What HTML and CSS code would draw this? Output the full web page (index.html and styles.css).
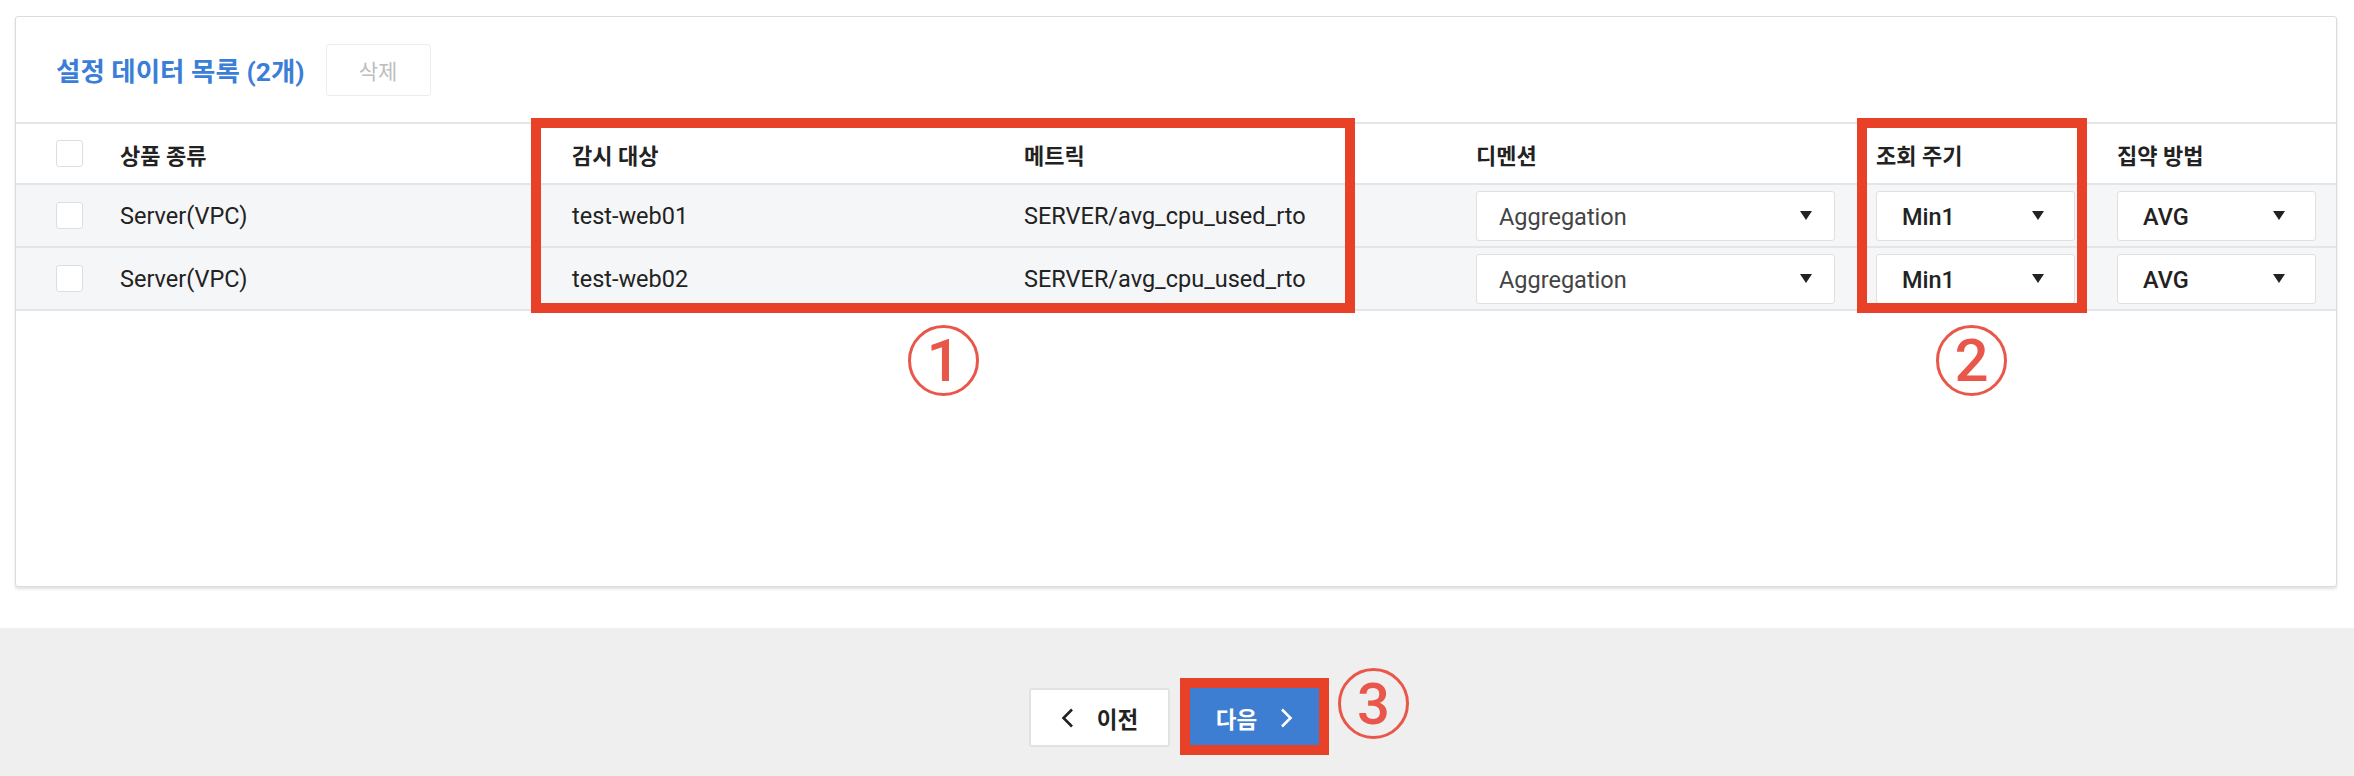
FILE: index.html
```html
<!DOCTYPE html>
<html>
<head>
  <meta charset="utf-8">
  <title>설정 데이터 목록</title>
  <link rel="stylesheet" href="styles.css">
</head>
<body>
  <div class="card">
    <div class="list-head">
      <h2 class="list-title">설정 데이터 목록 (2개)</h2>
      <button class="btn-delete">삭제</button>
    </div>

    <div class="grid">
      <div class="row head">
        <div class="cell chk"><span class="checkbox"></span></div>
        <div class="cell">상품 종류</div>
        <div class="cell">감시 대상</div>
        <div class="cell">메트릭</div>
        <div class="cell">디멘션</div>
        <div class="cell">조회 주기</div>
        <div class="cell">집약 방법</div>
      </div>
      <div class="row">
        <div class="cell chk"><span class="checkbox"></span></div>
        <div class="cell">Server(VPC)</div>
        <div class="cell">test-web01</div>
        <div class="cell">SERVER/avg_cpu_used_rto</div>
        <div class="cell"><div class="select wide muted">Aggregation<span class="caret"></span></div></div>
        <div class="cell"><div class="select">Min1<span class="caret"></span></div></div>
        <div class="cell"><div class="select">AVG<span class="caret"></span></div></div>
      </div>
      <div class="row">
        <div class="cell chk"><span class="checkbox"></span></div>
        <div class="cell">Server(VPC)</div>
        <div class="cell">test-web02</div>
        <div class="cell">SERVER/avg_cpu_used_rto</div>
        <div class="cell"><div class="select wide muted">Aggregation<span class="caret"></span></div></div>
        <div class="cell"><div class="select">Min1<span class="caret"></span></div></div>
        <div class="cell"><div class="select">AVG<span class="caret"></span></div></div>
      </div>
    </div>

    <!-- annotation marks -->
    <div class="mark-box box-1"></div>
    <div class="mark-box box-2"></div>
    <div class="mark-num num-1">1</div>
    <div class="mark-num num-2">2</div>
  </div>

  <div class="footer">
    <button class="btn btn-prev">
      <svg width="13" height="20" viewBox="0 0 13 20"><polyline points="11,1.5 2.5,10 11,18.5" fill="none" stroke="#222" stroke-width="2.6"/></svg>
      <span>이전</span>
    </button>
    <button class="btn btn-next">
      <span>다음</span>
      <svg width="13" height="20" viewBox="0 0 13 20"><polyline points="2,1.5 10.5,10 2,18.5" fill="none" stroke="#fff" stroke-width="2.6"/></svg>
      <span class="mark-box box-3"></span>
      <span class="mark-num num-3">3</span>
    </button>
  </div>
</body>
</html>
```

FILE: styles.css
```css
body {
  margin: 0;
  background: #fff;
  font-family: Roboto, "Noto Sans CJK KR", sans-serif;
  color: #222;
}

.card {
  position: relative;
  box-sizing: border-box;
  height: 571px;
  margin: 16px 17px 0 15px;
  border: 1px solid #dcdcdc;
  border-radius: 3px;
  box-shadow: 0 2px 3px rgba(0, 0, 0, 0.12);
  background: #fff;
}

.list-head {
  display: flex;
  align-items: center;
  height: 105px;
  padding: 0 40px;
}

.list-title {
  margin: 0 21px 0 0;
  font-size: 26.5px;
  font-weight: 700;
  color: #3b7ed8;
}

.btn-delete {
  width: 105px;
  height: 52px;
  border: 1.5px solid #ececec;
  border-radius: 3px;
  background: #fff;
  color: #bdbdbd;
  font-family: "Noto Sans CJK KR", sans-serif;
  font-size: 21px;
}

.grid {
  border-top: 2px solid #e4e5e7;
}

.row {
  display: grid;
  grid-template-columns: 104px 452px 452px 452px 400px 241px 1fr;
  align-items: center;
  height: 61px;
  border-bottom: 2px solid #e4e5e7;
  background: #f5f6f8;
  font-size: 23.5px;
}

.row.head {
  height: 59px;
  background: #fff;
  font-size: 22px;
  font-weight: 700;
}

.cell {
  white-space: nowrap;
}

.chk {
  padding-left: 40px;
  display: flex;
}

.checkbox {
  box-sizing: border-box;
  width: 27px;
  height: 27px;
  border: 1.5px solid #dedede;
  border-radius: 3px;
  background: #fff;
}

.select {
  position: relative;
  box-sizing: border-box;
  width: 199px;
  height: 50px;
  padding-left: 25px;
  line-height: 50px;
  border: 1.5px solid #e0e0e0;
  border-radius: 3px;
  background: #fff;
  font-weight: 500;
  color: #222;
}

.select.wide {
  width: 359px;
  padding-left: 22px;
}

.select.muted {
  font-weight: 400;
  color: #444;
}

.caret {
  position: absolute;
  right: 30px;
  top: 19px;
  border-left: 6.5px solid transparent;
  border-right: 6.5px solid transparent;
  border-top: 9px solid #222;
}

.select.wide .caret {
  right: 22px;
}

.footer {
  display: flex;
  justify-content: center;
  gap: 14px;
  height: 148px;
  box-sizing: border-box;
  margin-top: 41px;
  padding-top: 60px;
  background: #efefef;
}

.btn {
  position: relative;
  display: flex;
  align-items: center;
  justify-content: center;
  gap: 23px;
  box-sizing: border-box;
  width: 141px;
  height: 59px;
  border-radius: 3px;
  font-family: "Noto Sans CJK KR", sans-serif;
  font-size: 22.5px;
  font-weight: 700;
}

.btn-prev {
  border: 2px solid #e2e2e2;
  background: #fff;
  color: #222;
}

.btn-next {
  border: 0;
  background: #3d7dd2;
  color: #fff;
}

/* red annotations drawn over the screen */
.mark-box {
  position: absolute;
  box-sizing: border-box;
  border: 10px solid #e94128;
}

.box-1 {
  left: 515px;
  top: 101px;
  width: 824px;
  height: 195px;
}

.box-2 {
  left: 1841px;
  top: 101px;
  width: 230px;
  height: 195px;
}

.box-3 {
  left: -4px;
  top: -10px;
  width: 149px;
  height: 77px;
}

.mark-num {
  position: absolute;
  box-sizing: border-box;
  display: flex;
  align-items: center;
  justify-content: center;
  width: 71px;
  height: 71px;
  border: 3px solid #e9574b;
  border-radius: 50%;
  font-family: Roboto, sans-serif;
  font-size: 60px;
  font-weight: 500;
  line-height: 1;
  color: #e9574b;
}

.num-1 {
  left: 892px;
  top: 308px;
}

.num-2 {
  left: 1920px;
  top: 308px;
}

.num-3 {
  left: 154px;
  top: -20px;
  font-size: 58px;
}
```
